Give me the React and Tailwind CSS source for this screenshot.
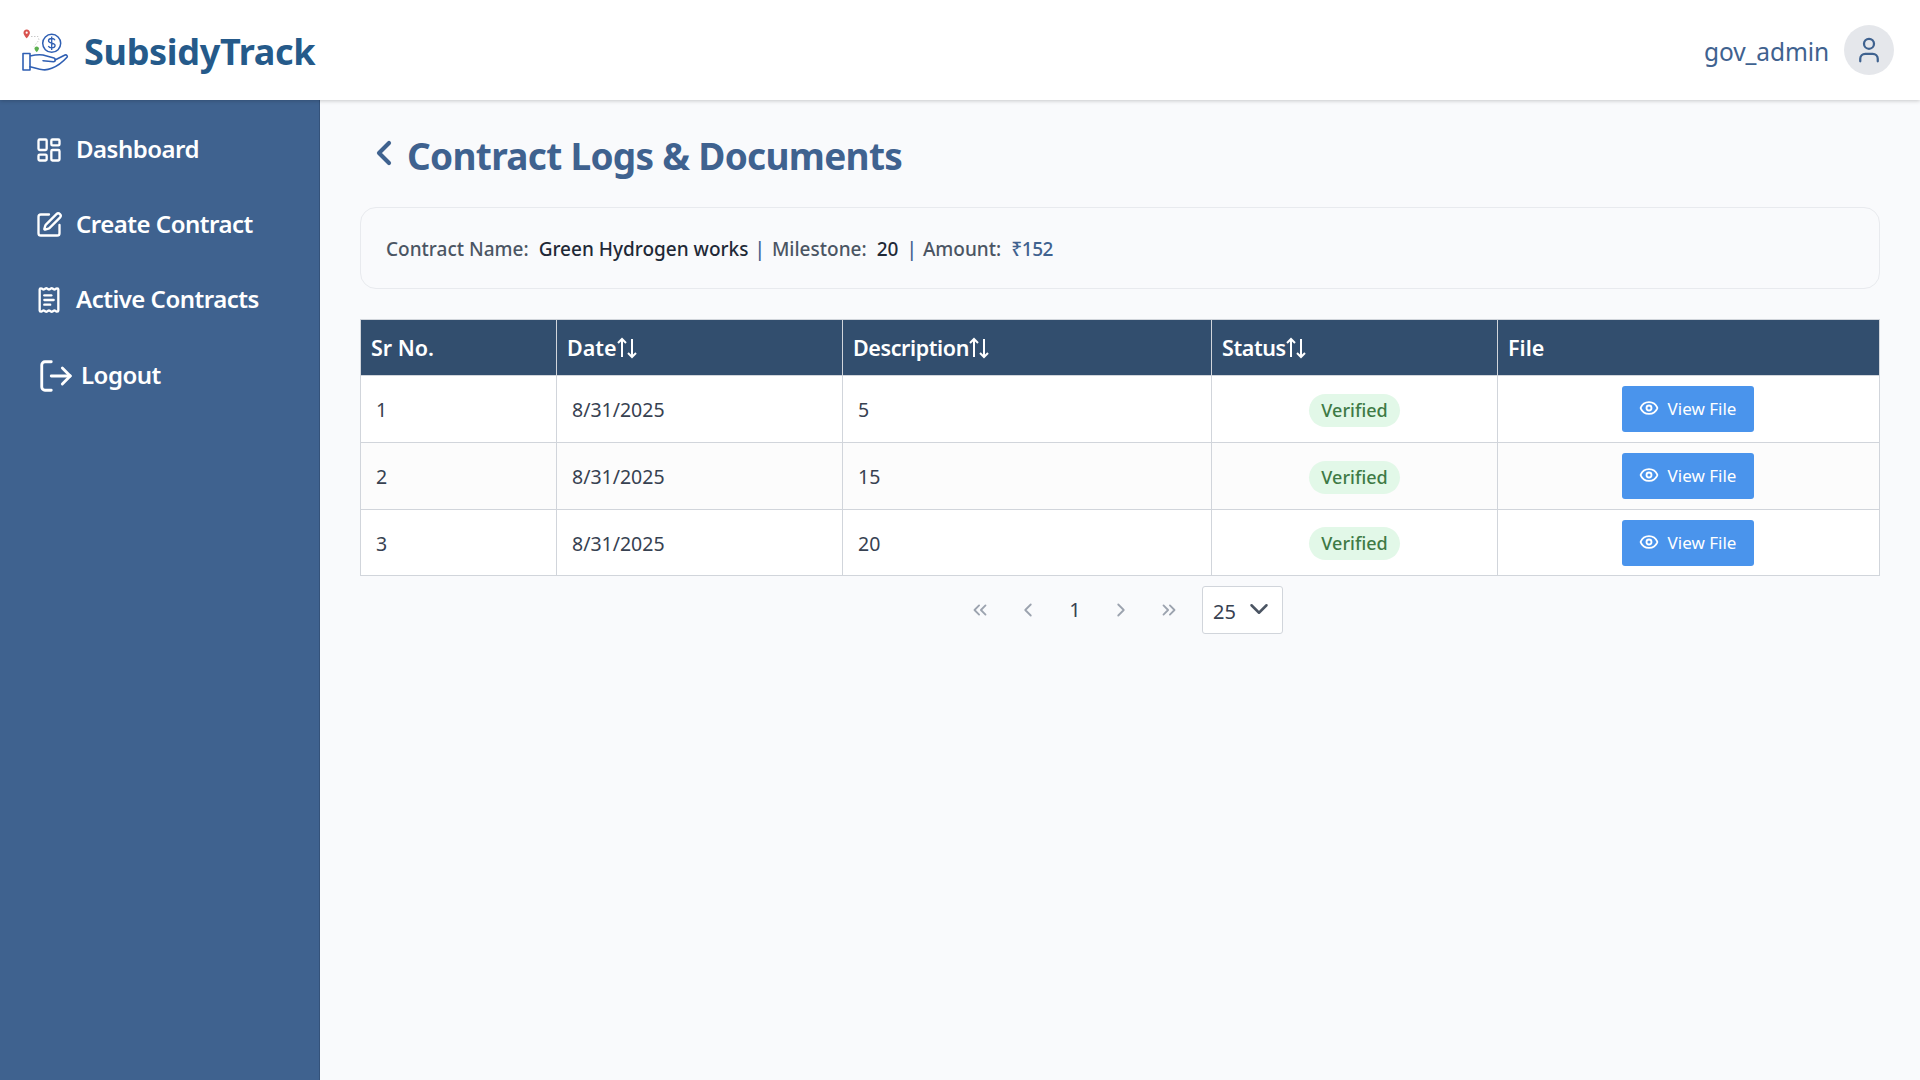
import React from 'react';
import { LayoutDashboard, SquarePen, ReceiptText, LogOut, ChevronLeft, ChevronRight, ChevronsLeft, ChevronsRight, ChevronDown, Eye, User } from 'lucide-react';

const font = "font-['Noto_Sans','Open_Sans',sans-serif]";

const rows = [
  { id: 1, date: '8/31/2025', desc: '5', h: 'h-[67px]', bg: 'bg-white' },
  { id: 2, date: '8/31/2025', desc: '15', h: 'h-[67px]', bg: 'bg-[#fcfcfc]' },
  { id: 3, date: '8/31/2025', desc: '20', h: 'h-[66px]', bg: 'bg-white' },
];

const Logo = () => (
  <svg width="48" height="44" viewBox="0 0 48 44" fill="none">
    <path d="M4.700 1.500c-2 0-3.200 1.500-3.200 3.200 0 2.300 3.200 5.600 3.200 5.600s3.200-3.300 3.200-5.600c0-1.700-1.200-3.200-3.200-3.200z" fill="#d9534f" />
    <circle cx="4.700" cy="4.700" r="1.100" fill="#fff" />
    <path d="M9 8.500h7l1 3.500-5 6.500" stroke="#bbb" strokeWidth="0.8" strokeDasharray="1.500 1.500" />
    <path d="M14.700 18.500c-1.400 0-2.200 1-2.200 2.100 0 1.500 2.200 3.700 2.200 3.700s2.200-2.200 2.200-3.700c0-1.100-.8-2.100-2.200-2.100z" fill="#5cb04f" />
    <circle cx="29.700" cy="15.300" r="9" stroke="#2f5fb3" strokeWidth="1.500" />
    <path d="M33 12.200c-.5-1-1.700-1.700-3.300-1.700-1.800 0-3.200.9-3.200 2.300 0 3.100 6.600 1.700 6.600 4.800 0 1.400-1.500 2.300-3.400 2.300-1.600 0-2.900-.7-3.400-1.800M29.700 8.500v13.500" stroke="#2f5fb3" strokeWidth="1.300" />
    <path d="M1 25.500h7v16.500H1zM8 28c4.500-1 9-1.500 13-1l11 3c1.800.6 1.800 3.700-.5 3.700l-10.500-1" stroke="#2f5fb3" strokeWidth="1.600" strokeLinejoin="round" strokeLinecap="round" />
    <path d="M33 32l10-5c1.500-.6 3 1 2 2.300-4 4.500-10 9-15.300 11-3 1.200-6 1.800-8.700 1.400-4-.6-8.500-2-13-3" stroke="#2f5fb3" strokeWidth="1.600" strokeLinejoin="round" strokeLinecap="round" />
  </svg>
);

const SortArrows = () => (
  <svg width="22" height="22" viewBox="0 0 22 22" fill="none" stroke="white" strokeWidth="2" className="-ml-[1px]">
    <path d="M6 20V2M2 6l4-4 4 4" />
    <path d="M16 2v18M12 16l4 4 4-4" />
  </svg>
);

const NavItem = ({ icon: Icon, label, className }) => (
  <div className={`flex items-center text-white text-[24px] font-semibold tracking-[-0.5px] ${className}`}>
    <Icon size={28} strokeWidth={2} className="mr-[13px] shrink-0" />
    <span className="-mt-[2px]">{label}</span>
  </div>
);

const App = () => {
  return (
    <div className={`${font} h-[1080px] w-[1920px] overflow-hidden bg-[#f9fafc] flex flex-col`}>
      {/* Header */}
      <header className="h-[100px] shrink-0 bg-white shadow-[0_1px_4px_rgba(0,0,0,0.2)] z-10 flex items-center justify-between pl-[22px] pr-[26px]">
        <div className="flex items-center">
          <Logo />
          <span className="ml-[14px] mt-[4px] text-[36px] font-bold tracking-[-0.3px] text-[#255a8a]">SubsidyTrack</span>
        </div>
        <div className="flex items-center">
          <span className="mt-[4px] text-[24.5px] tracking-[-0.1px] text-[#3f628f]">gov_admin</span>
          <div className="ml-[15px] w-[50px] h-[50px] rounded-full bg-[#e5e7eb] flex items-center justify-center">
            <User size={30} strokeWidth={1.800} className="text-[#3f628f]" />
          </div>
        </div>
      </header>

      <div className="flex flex-1 min-h-0">
        {/* Sidebar */}
        <aside className="w-[320px] shrink-0 bg-[#3f628f] border-r border-[#34527a] pt-[30px] pl-[35px]">
          <NavItem icon={LayoutDashboard} label="Dashboard" className="h-[40px] mb-[35px]" />
          <NavItem icon={SquarePen} label="Create Contract" className="h-[40px] mb-[35px]" />
          <NavItem icon={ReceiptText} label="Active Contracts" className="h-[40px] mb-[36px]" />
          <div className="flex items-center text-white text-[24px] font-semibold tracking-[-0.5px] h-[40px]">
            <LogOut size={38} strokeWidth={1.800} className="ml-[2px] mr-[6px]" />
            <span className="-mt-[2px]">Logout</span>
          </div>
        </aside>

        {/* Content */}
        <main className="flex-1 min-w-0 pt-[28px] pl-[40px] pr-[40px]">
          <div className="flex items-center h-[48px] pl-[10px] mb-[31px]">
            <ChevronLeft size={40} strokeWidth={2.500} className="text-[#3f628f] -ml-[6px] mr-[3px] mt-[1px]" />
            <h1 className="mt-[8px] text-[37px] font-bold tracking-[-0.7px] text-[#3f628f]">Contract Logs &amp; Documents</h1>
          </div>

          <div className="h-[82px] rounded-[16px] border border-[#e8eaee] flex items-center px-[25px] text-[19px] text-[#4b5563] font-medium mb-[30px]">
            <span className="mt-[2px]">Contract Name:</span>
            <span className="mt-[2px] ml-[10px] text-[#1f2937]">Green Hydrogen works</span>
            <span className="mt-[2px] ml-[6px] mr-[7px] text-[#3f628f]">|</span>
            <span className="mt-[2px]">Milestone:</span>
            <span className="mt-[2px] ml-[10px] text-[#1f2937]">20</span>
            <span className="mt-[2px] ml-[8px] mr-[6px] text-[#3f628f]">|</span>
            <span className="mt-[2px]">Amount:</span>
            <span className="mt-[2px] ml-[10px] tracking-[-0.4px] text-[#3f628f]">₹152</span>
          </div>

          <table className="w-[1519px] table-fixed border-collapse text-[19.5px] text-[#374151]">
            <colgroup>
              <col className="w-[196px]" />
              <col className="w-[286px]" />
              <col className="w-[369px]" />
              <col className="w-[286px]" />
              <col className="w-[382px]" />
            </colgroup>
            <thead>
              <tr className="h-[56px] bg-[#324e6e] text-white text-[21.5px] text-left">
                <th className="border border-[#d1d5db] pl-[10px] pt-[1px] font-semibold">Sr No.</th>
                <th className="border border-[#d1d5db] pl-[10px] pt-[1px] font-semibold">
                  <span className="flex items-center">Date<SortArrows /></span>
                </th>
                <th className="border border-[#d1d5db] pl-[10px] pt-[1px] font-semibold tracking-[-0.4px]">
                  <span className="flex items-center">Description<SortArrows /></span>
                </th>
                <th className="border border-[#d1d5db] pl-[10px] pt-[1px] font-semibold tracking-[-0.4px]">
                  <span className="flex items-center">Status<SortArrows /></span>
                </th>
                <th className="border border-[#d1d5db] pl-[10px] pt-[1px] font-semibold">File</th>
              </tr>
            </thead>
            <tbody>
              {rows.map((row) => (
                <tr key={row.id} className={`${row.h} ${row.bg}`}>
                  <td className="border border-[#d1d5db] pl-[15px] pt-[2px]">{row.id}</td>
                  <td className="border border-[#d1d5db] pl-[15px] pt-[2px]">{row.date}</td>
                  <td className="border border-[#d1d5db] pl-[15px] pt-[2px]">{row.desc}</td>
                  <td className="border border-[#d1d5db] text-center pt-[2px]">
                    <span className="inline-block h-[33px] leading-[33px] w-[91px] rounded-full bg-[#e2f8e8] text-[#3e7a45] text-[18px] font-medium">Verified</span>
                  </td>
                  <td className="border border-[#d1d5db] text-center pr-[2px]">
                    <button className="inline-flex items-center justify-center h-[46px] w-[132px] rounded-[3px] bg-[#4a94ec] text-white text-[17px]">
                      <Eye size={20} strokeWidth={2.200} className="mr-[9px] -mt-[2px]" />
                      View File
                    </button>
                  </td>
                </tr>
              ))}
            </tbody>
          </table>

          {/* Pagination */}
          <div className="flex items-center justify-center mt-[10px] h-[48px] pl-[12px] text-[#9ca3af]">
            <ChevronsLeft size={22} strokeWidth={2} />
            <ChevronLeft size={22} strokeWidth={2} className="ml-[26px]" />
            <span className="ml-[30px] w-[12px] text-center text-[20px] text-[#374151]">1</span>
            <ChevronRight size={22} strokeWidth={2} className="ml-[29px]" />
            <ChevronsRight size={22} strokeWidth={2} className="ml-[26px]" />
            <div className="ml-[22px] w-[81px] h-[48px] rounded-[3px] border border-[#d1d5db] bg-white flex items-center pl-[10px] text-[20px] text-[#374151]">
              <span className="mt-[3px]">25</span>
              <ChevronDown size={30} strokeWidth={2} className="ml-[8px] text-[#4b5563] -mt-[2px]" />
            </div>
          </div>
        </main>
      </div>
    </div>
  );
};

export default App;
